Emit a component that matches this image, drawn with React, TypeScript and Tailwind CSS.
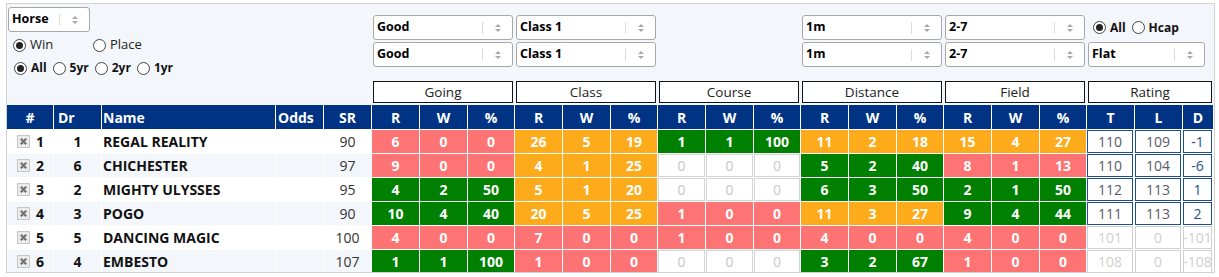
import React from "react";

const COLS =
  "grid-cols-[46px_47px_173px_47px_47px_47px_47px_46px_47px_47px_46px_47px_47px_46px_47px_47px_46px_47px_47px_46px_47px_47px_30px]";

type K = "r" | "o" | "g" | "e";
type Stat = [K, number, number, number];
type Row = {
  n: number;
  dr: number;
  name: string;
  sr: number;
  stats: Stat[];
  rating: [string, string, string];
  active: boolean;
};

const rows: Row[] = [
  { n: 1, dr: 1, name: "REGAL REALITY", sr: 90, stats: [["r", 6, 0, 0], ["o", 26, 5, 19], ["g", 1, 1, 100], ["o", 11, 2, 18], ["o", 15, 4, 27]], rating: ["110", "109", "-1"], active: true },
  { n: 2, dr: 6, name: "CHICHESTER", sr: 97, stats: [["r", 9, 0, 0], ["o", 4, 1, 25], ["e", 0, 0, 0], ["g", 5, 2, 40], ["r", 8, 1, 13]], rating: ["110", "104", "-6"], active: true },
  { n: 3, dr: 2, name: "MIGHTY ULYSSES", sr: 95, stats: [["g", 4, 2, 50], ["o", 5, 1, 20], ["e", 0, 0, 0], ["g", 6, 3, 50], ["g", 2, 1, 50]], rating: ["112", "113", "1"], active: true },
  { n: 4, dr: 3, name: "POGO", sr: 90, stats: [["g", 10, 4, 40], ["o", 20, 5, 25], ["r", 1, 0, 0], ["o", 11, 3, 27], ["g", 9, 4, 44]], rating: ["111", "113", "2"], active: true },
  { n: 5, dr: 5, name: "DANCING MAGIC", sr: 100, stats: [["r", 4, 0, 0], ["r", 7, 0, 0], ["r", 1, 0, 0], ["r", 4, 0, 0], ["r", 4, 0, 0]], rating: ["101", "0", "-101"], active: false },
  { n: 6, dr: 4, name: "EMBESTO", sr: 107, stats: [["g", 1, 1, 100], ["r", 1, 0, 0], ["e", 0, 0, 0], ["g", 3, 2, 67], ["r", 1, 0, 0]], rating: ["108", "0", "-108"], active: false },
];

const bgFor: Record<K, string> = {
  r: "bg-[#fe7373]",
  o: "bg-[#fdaa1b]",
  g: "bg-[#008000]",
  e: "bg-white",
};

function Arrows() {
  return (
    <svg width="6" height="10" viewBox="0 0 6 10" className="block">
      <polygon points="0,4 3,1 6,4" fill="#a9a9a9" />
      <polygon points="0,6 3,9 6,6" fill="#a9a9a9" />
    </svg>
  );
}

function Select({ label, className = "" }: { label: string; className?: string }) {
  return (
    <div className={`h-[25px] bg-white border border-[#a8a8a8] rounded-[3px] flex items-center ${className}`}>
      <span className="flex-1 pl-[3px] text-[12.5px] font-bold text-black leading-none">{label}</span>
      <div className="w-px h-[12px] bg-[#dcdcdc]" />
      <div className="w-[29px] flex justify-center">
        <Arrows />
      </div>
    </div>
  );
}

function Radio({ label, checked, bold }: { label: string; checked?: boolean; bold?: boolean }) {
  return (
    <div className="flex items-center gap-[4px]">
      <span className="w-[13px] h-[13px] rounded-full border border-[#444] bg-white flex items-center justify-center">
        {checked && <span className="w-[7px] h-[7px] rounded-full bg-[#222]" />}
      </span>
      <span className={bold ? "text-[12px] font-bold text-[#111]" : "text-[13px] text-[#222]"}>{label}</span>
    </div>
  );
}

function XBox() {
  return (
    <svg width="13" height="13" viewBox="0 0 13 13" className="block">
      <rect x="0.5" y="0.5" width="12" height="12" fill="#ebebeb" stroke="#c6c6c6" />
      <path d="M3.8 3.8 L9.2 9.2 M9.2 3.8 L3.8 9.2" stroke="#727272" strokeWidth="2.2" />
    </svg>
  );
}

export default function App() {
  return (
    <div className="w-[1219px] h-[277px] bg-white pt-[3px] pl-[6px]" style={{ fontFamily: "'Open Sans', 'Noto Sans', sans-serif" }}>
      <div className="w-[1209px] h-[270px] border border-[#d2d2d2] bg-[#f3f6fb] overflow-hidden">
        {/* controls */}
        <div className={`grid ${COLS} gap-x-px h-[77px]`}>
          <div className="col-span-5 flex flex-col">
            <Select label="Horse" className="ml-px mt-[3px] w-[82px]" />
            <div className="mt-[6px] ml-[6px] h-[14px] flex items-center">
              <div className="w-[80px]">
                <Radio label="Win" checked />
              </div>
              <Radio label="Place" />
            </div>
            <div className="mt-[9px] ml-[7px] h-[14px] flex items-center gap-[6px]">
              <Radio label="All" checked bold />
              <Radio label="5yr" bold />
              <Radio label="2yr" bold />
              <Radio label="1yr" bold />
            </div>
          </div>
          {["Good", "Class 1"].map((l) => (
            <div key={l} className="col-span-3 flex flex-col gap-[2px] pt-[11px] px-px">
              <Select label={l} />
              <Select label={l} />
            </div>
          ))}
          <div className="col-span-3" />
          {["1m", "2-7"].map((l) => (
            <div key={l} className="col-span-3 flex flex-col gap-[2px] pt-[11px] px-px">
              <Select label={l} />
              <Select label={l} />
            </div>
          ))}
          <div className="col-span-3 flex flex-col gap-[2px] pt-[11px]">
            <div className="h-[25px] flex items-center gap-[6px] pl-[6px]">
              <Radio label="All" checked bold />
              <Radio label="Hcap" bold />
            </div>
            <Select label="Flat" className="ml-px w-[117px]" />
          </div>
        </div>
        {/* group headers */}
        <div className={`grid ${COLS} gap-x-px h-[23px]`}>
          <div className="col-span-5" />
          {["Going", "Class", "Course", "Distance", "Field", "Rating"].map((g) => (
            <div key={g} className="col-span-3 px-px">
              <div className="h-[22px] border border-[#111] bg-white flex items-center justify-center text-[13.5px] text-[#222]">
                {g}
              </div>
            </div>
          ))}
        </div>
        {/* table */}
        <div className={`grid ${COLS} gap-px bg-white text-[14px] mt-px`}>
          {/* header */}
          {["#", "Dr", "Name", "Odds", "SR"].map((h, i) => (
            <div
              key={h}
              className={`h-[24px] bg-[#003383] text-white font-bold flex items-center ${
                i === 0 || i === 4 ? "justify-center" : i === 1 ? "pl-[4px]" : i === 2 ? "pl-px" : "pl-[2px]"
              }`}
            >
              {h}
            </div>
          ))}
          {Array.from({ length: 5 }).flatMap((_, b) =>
            ["R", "W", "%"].map((h) => (
              <div key={`${b}${h}`} className="h-[24px] bg-[#003383] text-white font-bold flex items-center justify-center">
                {h}
              </div>
            ))
          )}
          {["T", "L", "D"].map((h) => (
            <div key={h} className="h-[24px] bg-[#003383] text-white font-bold flex items-center justify-center">
              {h}
            </div>
          ))}
          {/* rows */}
          {rows.map((r, ri) => {
            const bg = ri % 2 === 1 ? "bg-[#f3f6fb]" : "bg-white";
            return (
              <React.Fragment key={r.n}>
                <div className={`h-[23px] ${bg} flex items-center pl-[10px] gap-[6px] font-bold text-[#111]`}>
                  <XBox />
                  <span>{r.n}</span>
                </div>
                <div className={`h-[23px] ${bg} flex items-center justify-center font-bold text-[#111]`}>{r.dr}</div>
                <div className={`h-[23px] ${bg} flex items-center pl-px font-bold text-[#111]`}>{r.name}</div>
                <div className={`h-[23px] ${bg}`} />
                <div className={`h-[23px] ${bg} flex items-center justify-center text-[#333]`}>{r.sr}</div>
                {r.stats.flatMap((s, si) =>
                  [s[1], s[2], s[3]].map((v, vi) =>
                    s[0] === "e" ? (
                      <div key={`${si}-${vi}`} className="h-[23px] bg-white">
                        <div className="h-full border border-[#d4d4d4] flex items-center justify-center text-[#c8c8c8]">0</div>
                      </div>
                    ) : (
                      <div
                        key={`${si}-${vi}`}
                        className={`h-[23px] ${bgFor[s[0]]} flex items-center justify-center text-white font-bold`}
                      >
                        {v}
                      </div>
                    )
                  )
                )}
                {r.rating.map((v, vi) => (
                  <div key={`rt${vi}`} className="h-[23px] bg-white pr-px">
                    <div
                      className={`h-full border flex items-center justify-center ${
                        r.active
                          ? `border-[#1f4f8d] ${vi === 2 ? "text-[#24508a]" : "text-[#5a5a6a]"}`
                          : "border-[#d0d0d0] text-[#cfcfcf]"
                      }`}
                    >
                      {v}
                    </div>
                  </div>
                ))}
              </React.Fragment>
            );
          })}
        </div>
      </div>
    </div>
  );
}
